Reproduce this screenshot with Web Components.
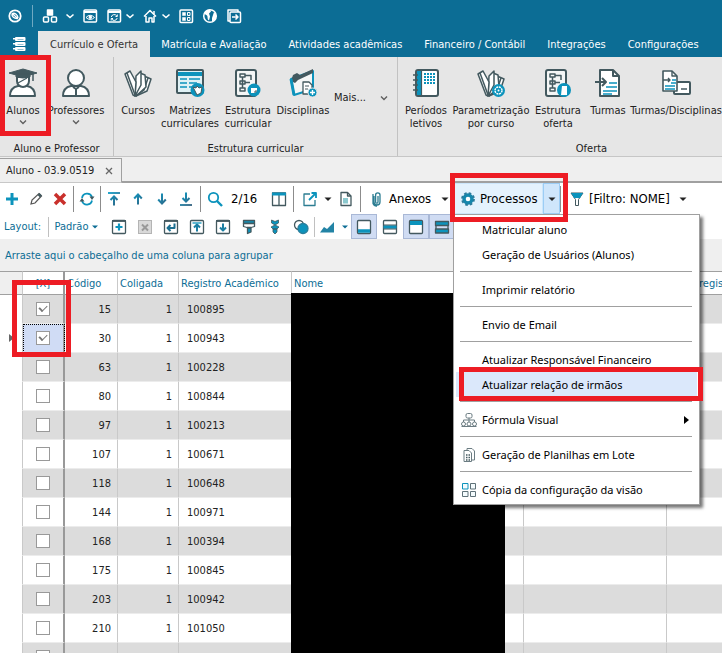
<!DOCTYPE html>
<html lang="pt-BR">
<head>
<meta charset="utf-8">
<title>Aluno - 03.9.0519</title>
<style>
  :root {
    --ui: "DejaVu Sans Condensed", "DejaVu Sans", sans-serif;
    --menu: "Noto Sans", "Open Sans", sans-serif;
    --blue: #0c6d95;
    --teal: #0c93bc;
    --slate: #43595f;
    --line: #a0a0a0;
    --panel: #efefef;
    --red: #ed1c24;
  }
  html, body { height: 100%; }
  body { margin: 0; overflow: hidden; font: 11px/13px var(--ui); color: #222; background: #fff; }
</style>
</head>
<body>
<app-shell></app-shell>

<script>
const T = '#0c93bc', S = '#43595f';
const book = '<g stroke-width="1.500" fill="#fff"><path d="M21 8l7 3-4 12-11 5z"/><path d="M25 10l-4 12-8 6"/><path d="M17 5l5 2 1 12-10 9z"/><path d="M13 8l5-5v14l-6 11z"/><path d="M2 6l5-3 6 11-1 14-2-1z"/><path d="M4 5l8 22"/></g>';
const flow = '<rect x="3" y="2" width="20" height="26" rx="2" fill="#f4f6f6"/><path d="M7 6h5v3H7zM7 13h5v3H7zM7 20h5v3H7zM9.500 9v11M12 7.500h6V12M12 14.500h5" stroke-width="1.500" fill="none"/>';
const sheet = (x, y, w, h) => `<path fill="#fff" d="M${x} ${y}h${w - 6}l6 6v${h - 6}h-${w}z"/><path d="M${x + w - 6} ${y}v6h6" fill="none"/>`;
const R = body => [30, `<g stroke="${S}" stroke-width="2" stroke-linejoin="round">${body}</g>`];
const W = body => [16, `<g stroke="#fff" stroke-width="1.500" fill="none" stroke-linejoin="round">${body}</g>`];
const K = body => [16, `<g stroke="${S}" stroke-width="1.300" fill="none" stroke-linejoin="round">${body}</g>`];
const frame = '<rect x="1.500" y="1.500" width="13" height="13" rx="1" fill="#fff"/>';
const arrow = (d, bar) => [16, `<g fill="none" stroke="url(#ab)" stroke-width="2"><path d="${d}"/><path d="${bar || ''}" stroke-width="1.800"/></g><defs><linearGradient id="ab" gradientUnits="userSpaceOnUse" x1="2" y1="2" x2="14" y2="14"><stop stop-color="#0c9dc8"/><stop offset="1" stop-color="#34607e"/></linearGradient></defs>`];

const ICONS = {
  logo: W('<circle cx="8" cy="8" r="5.700" stroke-width="1.800"/><path d="M5 5.500c3-1 6 1.500 6 4.500M5 5.500c-.5 3 2 5.500 6 5M5 5.500l6 5" stroke-width="1.300"/>'),
  cubes: W('<path fill="#fff" d="M5.500 2h5v5h-5z"/><rect x="1.500" y="9" width="5" height="5" rx="1"/><rect x="9.500" y="9" width="5" height="5" rx="1"/>'),
  eye: W('<rect x="2" y="2" width="12.500" height="12" rx="1"/><path d="M2 4h12" stroke-width="2"/><path d="M4 9.500q4-4.500 8.500 0q-4.500 4-8.500 0z" stroke-width="1"/><circle cx="8.300" cy="9.300" r="1" fill="#fff"/>'),
  cycle: W('<rect x="2" y="2" width="12.500" height="12" rx="1"/><path d="M2 4h12" stroke-width="2"/><path d="M5.300 9a3 3 0 0 1 5.500-1M11.200 10a3 3 0 0 1-5.500 1M11.300 6.500v2H9.500M5.200 12.500v-2H7" stroke-width="1"/>'),
  home: W('<path d="M2 8.500L8 2.500l6 6M4 8v6h3v-4h3v4h2V8" /><path d="M12 3v3"/>'),
  tiles: W('<rect x="2" y="2" width="12.500" height="12.500" rx="1"/><path d="M4.500 4.500h3v3h-3zM4.500 9.500h3v3h-3z" fill="#fff" stroke-width=".5"/><path d="M9.500 4.500h2.500v3h-2.500zM9.500 9.500h2.500v3h-2.500z" stroke-width="1"/>'),
  globe: W('<circle cx="8" cy="8" r="6.300"/><path d="M2 6c1-3 4-4.500 6-4.500l1 2-2 2 1 3-1 4c-2-1-1-4-2-5s-2-1-3-1.500zM12 4l2 2v5l-4 3 0-4z" fill="#fff" stroke="none"/>'),
  leave: W('<path d="M2 3V2h10v2M2 3v10h2"/><rect x="4" y="4" width="10.500" height="10.500" rx="1"/><path d="M6 9h6M9.500 6.500L12 9l-2.500 2.500"/>'),
  menu: [16, '<g fill="#fff"><rect x="4" y="1" width="10.500" height="4" rx="1"/><rect x="4" y="6" width="10.500" height="4" rx="1"/><rect x="4" y="11" width="10.500" height="4" rx="1"/><path d="M2 2h3v1.500H2zM2 7h3v1.500H2zM2 12h3v1.500H2z"/></g><path d="M6.500 3.500h6M6.500 8.500h6M6.500 13.500h6" stroke="#7fb3c9" stroke-width=".8"/>'],
  chevW: [10, '<path d="M1.500 3.500L5 6.500l3.500-3" stroke="#fff" stroke-width="1.600" fill="none"/>'],
  chev: [10, '<path d="M2 3.500l3 3 3-3" stroke="#606060" stroke-width="1.400" fill="none"/>'],
  caret: [10, '<path d="M1.500 3.500h7L5 7z" fill="#222"/>'],
  caretB: [10, '<path d="M2 3.500h6L5 6.500z" fill="#0c6d95"/>'],
  close: [10, '<path d="M2 2l6 6M8 2L2 8" stroke="#666" stroke-width="1.300"/>'],

  student: R(`<path fill="#fff" d="M2 28c0-6 3-9 8-10h9c5 1 8 4 8 10z"/><path fill="#fff" d="M9 9h12v4a6 6 0 0 1-12 0z"/><path d="M10 15l9-5" stroke-width="1.200"/><path fill="${S}" d="M1 5l14-4 14 4-14 4zM8 6h14v3l-7 1-7-1z" stroke-width="1"/><path d="M25 6v7" stroke-width="1.500"/>`),
  teacher: R('<path fill="#fff" d="M2 28c0-6 3-9 8-10h10c5 1 8 4 8 10z"/><circle cx="15" cy="10" r="8" fill="#fff"/><path d="M12 19l3 2 3-2M15 21v7" fill="none"/>'),
  books: R(book),
  matrix: R(`<rect x="2" y="2" width="26" height="23" rx="1" fill="#dff1f5"/><path d="M3 6h24" stroke="${T}" stroke-width="4"/><path d="M5 11h7M5 15h7M5 19h7M14 11h11M14 15h8M14 19h5" stroke="${T}" stroke-width="1.300"/><circle cx="22.500" cy="22" r="7" fill="${T}" stroke="none"/><path d="M18 19l3 1 1-2 2 2 3-1-1 6-4 2z" fill="#fff" stroke-width="1"/>`),
  flowA: R(flow + `<circle cx="21" cy="22" r="6.500" fill="${T}" stroke="none"/><path d="M18 20h6v3l-2 2h-4z" fill="#fff" stroke="none"/><path d="M22 25v-2h2" stroke-width="1" fill="none"/>`),
  flowB: R(flow + `<circle cx="21" cy="22" r="7" fill="${T}" stroke="none"/><path d="M19 18h5v9h-6z" fill="#fff" stroke="none"/>`),
  folder: R(`<path fill="#f4f6f6" stroke="${T}" d="M3 11L25 3v18L6 27z"/><path fill="${S}" stroke="none" d="M3 13l2-6 4-2 3 2 13-6v4L10 12l-3 3z"/><path d="M3 11l3 16" stroke="${T}" stroke-width="3"/><path fill="#fff" d="M15 14h6l3 3v9h-9z" stroke-width="1.300"/><path d="M17 18h4M17 21h3" stroke-width="1"/><circle cx="24.500" cy="24.500" r="4.500" fill="${T}" stroke="#e6e6e6" stroke-width="1"/><path d="M22 24.500h5M24.500 22v5" stroke="#fff" stroke-width="1.400"/>`),
  notebook: R(`<rect x="5" y="2" width="22" height="26" rx="2" fill="#fff"/><path d="M8 3v24" stroke="${T}" stroke-width="4"/><path d="M10.500 2v26" stroke-width="1.200"/><path d="M2 7h5M2 12h5M2 17h5M2 22h5" stroke-width="1.500"/><path d="M13 6h12M13 9h12M13 12h12M13 15h12" stroke="${T}" stroke-width="2" stroke-dasharray="2 1"/>`),
  booksGear: R(book + `<circle cx="22.500" cy="22.500" r="6.500" fill="${T}" stroke="none"/><circle cx="22.500" cy="22.500" r="3.500" fill="none" stroke="#fff" stroke-width="1.400" stroke-dasharray="2 .75"/><circle cx="22.500" cy="22.500" r="1" fill="#fff" stroke="none"/>`),
  pageIn: R(sheet(7, 2, 19, 26) + `<path d="M2 14h11M9 10l4 4-4 4" fill="none"/><path d="M16 15h8M13 19h11M10 23h14M10 26h9" stroke="${T}" stroke-width="1.600"/>`),
  pageCard: R(`<rect x="13" y="14" width="16" height="12" rx="1" fill="#fff"/><path d="M20 21h6" stroke-width="1.500"/><path fill="#fff" d="M2 3h9l5 5v15H2z" stroke-width="1.600"/><path d="M11 3v5h5M2 12h7M7 10l2 2-2 2" fill="none" stroke-width="1.400"/><path d="M11 12h4M10 15h5M4 18h10M4 21h10" stroke="${T}" stroke-width="1.500"/>`),

  plus: [16, `<path d="M8 2v12M2 8h12" stroke="${T}" stroke-width="3"/>`],
  pencil: [16, '<path d="M3 13l1-4 7-6.500 2.500 2.500L7 12z" fill="#fff" stroke="#555" stroke-width="1.200"/><path d="M9.500 4l2-2 2.500 2.500-2 2z" fill="#43595f"/>'],
  cross: [16, '<path d="M3 3l10 10M13 3L3 13" stroke="#c9302c" stroke-width="3.500"/>'],
  refresh: [16, `<path d="M3 7a5.200 5.200 0 0 1 10-1M13 9.500a5.200 5.200 0 0 1-10 .5" fill="none" stroke="${T}" stroke-width="1.800"/><path d="M10.500 5.500h5L13 9zM.5 10.500h5L3 7z" fill="${S}"/>`],
  top: arrow('M8 14.500V5.500M4.500 9L8 5.500 11.500 9', 'M2 2h12'),
  up: arrow('M8 13.500V3.500M4.200 7.500L8 3.500l3.800 4'),
  down: arrow('M8 2.500v10M4.200 8.500l3.800 4 3.800-4'),
  bottom: arrow('M8 1.500v9M4.500 7L8 10.500 11.500 7', 'M2 14h12'),
  search: [16, `<circle cx="6.500" cy="6.500" r="4.700" fill="none" stroke="${T}" stroke-width="1.800"/><path d="M10 10l5 5" stroke="${T}" stroke-width="2.400"/>`],
  columns: K(`<path d="M1.500 2h13v12.500h-13zM8 2v12.500"/><path d="M1 3h14" stroke="${T}" stroke-width="3"/>`),
  share: K(`<path d="M8 3H2v11.500h11V9" stroke="#2c7d92"/><path d="M7 9l6-6M9.500 2H14v5" stroke="${T}" stroke-width="1.800"/>`),
  page: K('<path fill="#fff" d="M3 1.500h6.500L13 5v9.500H3z"/><path d="M9.500 1.500V5H13" /><path d="M5 7h5v5.500H5z" fill="#8cc9cf" stroke="none"/>'),
  clip: [16, `<path d="M5 5v6a3 3 0 0 0 6 0V4a2.200 2.200 0 0 0-4.400 0v7a1 1 0 0 0 2.400 0V5M4 3v9.500a4 4 0 0 0 4 2.500" fill="none" stroke="#2c7d92" stroke-width="1.300"/>`],
  gear: [16, `<circle cx="8" cy="8" r="4" fill="#fff" stroke="#1587ad" stroke-width="3.400"/><circle cx="8" cy="8" r="6" fill="none" stroke="#2b7a9a" stroke-width="1.800" stroke-dasharray="2.600 2.110"/>`],
  funnel: [16, `<path d="M2 2h12L9.500 8.500v6h-3v-6z" fill="#fff" stroke="#43595f" stroke-width="1"/><path d="M2 2h12l-3 5H5z" fill="${T}"/>`],

  addBox: K(frame + `<path d="M8 4.500v7M4.500 8h7" stroke="${T}" stroke-width="2.200"/><path d="M1 2h14" stroke-width="1.800"/>`),
  delBox: [16, '<rect x="1.500" y="1.500" width="13" height="13" fill="#d9d9d9" stroke="#b4b4b4"/><path d="M5 5.500l6 6M11 5.500l-6 6" stroke="#999" stroke-width="2"/>'],
  backBox: K(frame + `<path d="M11.500 4.500V9H5M7.500 6L4.500 9l3 3" stroke="#1b6f91" stroke-width="2"/><path d="M1 2h14" stroke-width="1.800"/>`),
  upBox: K(frame + `<path d="M8 12.500V6M5 8.500l3-3 3 3" stroke="#1b7fa3" stroke-width="2"/><path d="M3.500 4h9" stroke="${T}"/>`),
  downBox: K(frame + `<path d="M8 4.500V11M5 8.500l3 3 3-3" stroke="#1b7fa3" stroke-width="2"/><path d="M1 2h14" stroke-width="1.800"/>`),
  brush: K(`<path fill="${T}" d="M2.500 1.500h11v3h-11z"/><path fill="#fff" d="M2.500 4.500h11v3l-3.500 1H6l-3.500-1z"/><path fill="${T}" d="M6.500 9h3.500v4l-3.500 1.500z"/>`),
  pin: [16, `<path d="M4.500 1L8 2.500 11.500 1v3L8 6 4.500 4zM8 6l4 2-2 2H6L4 8zM6 10h4v3l-2 2-2-2z" fill="${T}" stroke="${S}" stroke-width=".8"/>`],
  circles: K(`<circle cx="6" cy="6" r="4.500" fill="#fff"/><circle cx="10" cy="9.500" r="5" fill="${T}" stroke="#2a7f9c"/>`),
  chart: [16, `<path d="M1 13.500l4-5.500 3 2 7-7v10.500z" fill="#2283a5"/>`],
  paneB: K(frame + `<path d="M2 12h12" stroke="${T}" stroke-width="3.500"/>`),
  paneM: K(frame + `<path d="M1.500 8h13" stroke="${T}" stroke-width="3.500"/><path d="M1 6h14M1 10h14" stroke-width="1"/>`),
  paneT: K(frame + `<path d="M2 4h12" stroke="${T}" stroke-width="4"/>`),
  rows: K(`<path fill="${T}" d="M1.500 2.500h13v4h-13zM1.500 10h13v4h-13z"/><path d="M2 6.500v3.500M14 6.500v3.500"/>`),

  tree: [16, '<g fill="#fff" stroke="#6b7c82"><rect x="5" y="1.500" width="6" height="4.500" rx="1.500"/><circle cx="2.500" cy="12" r="2"/><circle cx="8" cy="12" r="2"/><circle cx="13.500" cy="12" r="2"/><path d="M8 6v4M2.500 10V8h11v2" fill="none"/><path d="M.5 14.500h15"/></g>'],
  sheets: [16, `<g fill="#fff" stroke="#6b7c82"><path d="M6 1.500h5l2.500 2.500v9H6z"/><path d="M3 3.500h5l2.500 2.500v8.500H3z"/></g><path d="M5 8h4M5 10.500h4M5 13h4" stroke="${S}" stroke-width="1.400" stroke-dasharray="1.500 1"/>`],
  grid4: [16, `<g fill="#f4fbfd" stroke="#5f7178"><path stroke="${T}" d="M1.500 1.500h5.500v5.500H1.500z"/><path d="M9.500 1.500h5v5.500h-5zM1.500 9.500h5.500v5H1.500zM9.500 9.500h5v5h-5z"/></g>`],
};

function define(name, html, setup) {
  const tpl = document.createElement('template');
  tpl.innerHTML = html;
  customElements.define(name, class extends HTMLElement {
    connectedCallback() {
      if (this.shadowRoot) return;
      const root = this.attachShadow({ mode: 'open' });
      root.append(tpl.content.cloneNode(true));
      if (setup) setup(this, root);
    }
  });
}
const buttonReset = 'button{font:inherit;color:inherit;background:none;border:0;margin:0;padding:0;}';

define('ui-icon', `<style>:host{display:block;flex:none;width:var(--size,16px);height:var(--size,16px)}svg{display:block;width:100%;height:100%}</style>`,
  (el, root) => {
    const [box, body] = ICONS[el.getAttribute('name')];
    root.innerHTML += `<svg viewBox="0 0 ${box} ${box}" aria-hidden="true">${body}</svg>`;
  });

define('call-out', `<style>:host{display:block;position:absolute;box-sizing:border-box;border:5px solid var(--red);pointer-events:none;z-index:5}</style>`);

/* title bar */
define('quick-button', `<style>:host{display:block}${buttonReset}button{display:flex;align-items:center}
  ui-icon.i{margin:0 2px}ui-icon.c{--size:10px;margin:0 1px}</style><button></button>`,
  (el, root) => {
    const b = root.querySelector('button');
    b.setAttribute('aria-label', el.getAttribute('label'));
    b.innerHTML = (el.hasAttribute('icon') ? `<ui-icon class="i" name="${el.getAttribute('icon')}"></ui-icon>` : '')
      + (el.hasAttribute('drop') ? '<ui-icon class="c" name="chevW"></ui-icon>' : '');
  });

define('ribbon-tab', `<style>:host{display:flex}${buttonReset}button{padding:0 11px;color:#fff;white-space:nowrap}
  :host([active]) button{padding:0 12px;background:#e6e6e6;color:#333}</style><button role="tab"><slot></slot></button>`);

define('title-bar', `<style>
  :host{display:block;background:var(--blue)}
  ${buttonReset}
  .quick{display:flex;align-items:center;gap:4px;height:31px;padding-left:5px}
  .sep{width:7px;height:22px;background:linear-gradient(#6fa9c2,#6fa9c2) center/1px 100% no-repeat}
  .tabs{display:flex;height:26px}
  button.app{width:38px;display:flex;justify-content:center;align-items:center}
  </style>
  <div class="quick">
    <quick-button icon="logo" label="Início"></quick-button><span class="sep"></span>
    <quick-button icon="cubes" label="Módulos"></quick-button><quick-button drop label="Mais módulos"></quick-button>
    <quick-button icon="eye" label="Visões"></quick-button><quick-button icon="cycle" drop label="Atualizar"></quick-button>
    <quick-button icon="home" drop label="Página inicial"></quick-button><quick-button icon="tiles" label="Painel"></quick-button>
    <quick-button icon="globe" label="Portal"></quick-button><quick-button icon="leave" label="Sair"></quick-button>
  </div>
  <div class="tabs" role="tablist">
    <button class="app" aria-label="Menu"><ui-icon name="menu"></ui-icon></button>
    <slot></slot>
  </div>`);

/* ribbon */
define('ribbon-item', `<style>
  :host{display:block;flex:none;position:relative}
  ${buttonReset}
  button{width:100%;display:flex;flex-direction:column;align-items:center;padding-top:11px;text-align:center;white-space:nowrap}
  ui-icon{--size:30px}.text{margin-top:6px}
  .chev{--size:10px}
  :host([inline]) button{flex-direction:row;justify-content:space-between;padding:34px 8px 0 6px}
  :host([inline]) .text{margin:0}
  </style><button><span class="text"><slot></slot></span></button><slot name="mark"></slot>`,
  (el, root) => {
    const b = root.querySelector('button');
    if (el.hasAttribute('icon')) b.insertAdjacentHTML('afterbegin', `<ui-icon name="${el.getAttribute('icon')}"></ui-icon>`);
    if (el.hasAttribute('drop')) b.insertAdjacentHTML('beforeend', '<ui-icon class="chev" name="chev"></ui-icon>');
  });

define('ribbon-group', `<style>
  :host{display:flex;flex-direction:column;flex:none;box-sizing:border-box;border-right:1px solid #c2c2c2}
  .items{display:flex;flex:1}
  .caption{text-align:center;height:14px}
  </style><div class="items"><slot></slot></div><div class="caption"></div>`,
  (el, root) => { root.querySelector('.caption').textContent = el.getAttribute('caption'); });

define('app-ribbon', `<style>:host{display:flex;height:99px;background:#e6e6e6;border-bottom:1px solid #c6c6c6}</style><slot></slot>`);

define('document-tabs', `<style>
  :host{display:flex;height:26px;background:var(--panel);box-sizing:border-box;padding-top:1px}
  ${buttonReset}
  .tab{display:flex;align-items:center;gap:10px;padding:0 7px 0 6px;border:1px solid var(--line);border-left:0;border-bottom-color:#c8c8c8;white-space:nowrap}
  .rest{flex:1;border-bottom:2px solid var(--line)}
  ui-icon{--size:10px}
  </style><div class="tab"><slot></slot><button aria-label="Fechar"><ui-icon name="close"></ui-icon></button></div><div class="rest"></div>`);

/* tool bars */
define('tool-button', `<style>
  :host{display:flex;flex:none;width:var(--w,24px);align-self:stretch}
  ${buttonReset}
  button{flex:1;display:flex;align-items:center;justify-content:center;white-space:nowrap}
  :host([pressed]) button{background:#d0dcf3;box-shadow:inset 0 0 0 1px #a9b8d6}
  .c{--size:10px;margin:0 1px}
  .i{margin:0 4px}
  :host([pack]) button{justify-content:flex-start}
  </style><button><slot></slot></button>`,
  (el, root) => {
    const b = root.querySelector('button');
    if (el.hasAttribute('label')) b.setAttribute('aria-label', el.getAttribute('label'));
    if (el.hasAttribute('pressed')) b.setAttribute('aria-pressed', 'true');
    if (el.hasAttribute('icon')) b.insertAdjacentHTML('afterbegin', `<ui-icon class="i" name="${el.getAttribute('icon')}"></ui-icon>`);
    if (el.hasAttribute('caret')) b.insertAdjacentHTML('beforeend', `<ui-icon class="c" name="${el.getAttribute('caret')}"></ui-icon>`);
  });

define('menu-item', `<style>
  :host{display:block;position:relative}
  ${buttonReset}
  button{display:flex;align-items:center;width:100%;height:25px;padding:0 8px 0 5px;text-align:left;white-space:nowrap}
  .slot{width:18px;margin-right:3px;flex:none}
  .text{flex:1}
  .arrow{border:4px solid transparent;border-left:5px solid #000;border-right:0}
  :host([current]) button{background:#dbe8fb}
  </style><button role="menuitem"><span class="slot"></span><span class="text"><slot></slot></span></button><slot name="mark"></slot>`,
  (el, root) => {
    if (el.hasAttribute('icon')) root.querySelector('.slot').innerHTML = `<ui-icon name="${el.getAttribute('icon')}"></ui-icon>`;
    if (el.hasAttribute('sub')) root.querySelector('button').insertAdjacentHTML('beforeend', '<span class="arrow"></span>');
  });

define('menu-line', `<style>:host{display:block;margin:4px 5px 5px 4px;height:1px;background:var(--line)}</style>`);

define('popup-menu', `<style>
  :host{display:block;position:absolute;top:100%;left:-1px;z-index:4;box-sizing:border-box;width:247px;padding:2px;
    border:1px solid var(--line);background:#fff;color:#000;font:11px/15px var(--menu);box-shadow:3px 3px 3px #0008}
  </style><div role="menu"><slot></slot></div>`);

define('process-button', `<style>
  :host{display:flex;flex:none;position:relative;align-self:stretch}
  ${buttonReset}
  button.main{display:flex;align-items:center;gap:4px;width:89px;padding-left:6px;background:#e4f2fd;box-shadow:inset 0 0 0 1px #cce6fb}
  button.drop{width:17px;background:#cfe6fb;box-shadow:inset 0 0 0 1px #9ccdf5;display:flex;align-items:center;justify-content:center}
  ui-icon.c{--size:10px}
  call-out{inset:-10px -8px -8px -4px}
  </style>
  <button class="main"><ui-icon name="gear"></ui-icon>Processos</button>
  <button class="drop" aria-label="Abrir processos" aria-expanded="true"><ui-icon class="c" name="caret"></ui-icon></button>
  <slot></slot><call-out></call-out>`);

define('view-toolbar', `<style>
  :host{display:block;background:#fff;white-space:nowrap}
  .row{display:flex;align-items:center}
  .main{height:31px;font-size:13px;line-height:16px;color:#000}
  .layout{height:25px;color:#0c6d95}
  .sep{flex:none;width:1px;height:26px;background:#8c8c8c;margin:0 4px 0 2px}
  .sep.even{margin:0 2px}
  .sep.tight{margin:0 1px}
  .sep.flush{margin:0 4px 0 0}
  .layout .sep{height:20px;background:#c0c0c0;margin:0}
  .count{box-sizing:border-box;width:40px;padding-left:4px}
  .label{box-sizing:border-box;width:48px;padding-left:4px}
  .layout tool-button{--w:26px}
  .layout .mode{--w:57px}.layout .graph{--w:36px}
  .export{--w:36px}.attach{--w:89px}.filter{--w:128px}
  </style>
  <div class="row main">
    <tool-button icon="plus" label="Incluir"></tool-button><tool-button icon="pencil" label="Editar"></tool-button>
    <tool-button icon="cross" label="Excluir"></tool-button><span class="sep tight"></span>
    <tool-button icon="refresh" label="Atualizar"></tool-button><span class="sep tight"></span>
    <tool-button icon="top" label="Primeiro"></tool-button><tool-button icon="up" label="Anterior"></tool-button>
    <tool-button icon="down" label="Próximo"></tool-button><tool-button icon="bottom" label="Último"></tool-button><span class="sep even"></span>
    <tool-button icon="search" label="Procurar"></tool-button><span class="count">2/16</span>
    <tool-button icon="columns" label="Colunas"></tool-button><span class="sep"></span>
    <tool-button class="export" icon="share" caret="caret" label="Exportar"></tool-button>
    <tool-button icon="page" label="Relatório"></tool-button><span class="sep"></span>
    <tool-button class="attach" pack icon="clip" caret="caret">Anexos&nbsp;&nbsp;</tool-button>
    <slot></slot><span class="sep flush"></span>
    <tool-button class="filter" pack icon="funnel" caret="caret">[Filtro: NOME]&nbsp;&nbsp;</tool-button>
  </div>
  <div class="row layout">
    <span class="label">Layout:</span><span class="sep"></span>
    <tool-button class="mode" caret="caretB">Padrão</tool-button>
    <tool-button icon="addBox" label="Novo layout"></tool-button><tool-button icon="delBox" label="Excluir layout"></tool-button>
    <tool-button icon="backBox" label="Restaurar"></tool-button><tool-button icon="upBox" label="Exportar layout"></tool-button>
    <tool-button icon="downBox" label="Importar layout"></tool-button><tool-button icon="brush" label="Formatar"></tool-button>
    <tool-button icon="pin" label="Fixar"></tool-button><tool-button icon="circles" label="Condições"></tool-button><span class="sep"></span>
    <tool-button class="graph" icon="chart" caret="caretB" label="Gráfico"></tool-button>
    <tool-button pressed icon="paneB" label="Rodapé"></tool-button><tool-button icon="paneM" label="Detalhe"></tool-button>
    <tool-button pressed icon="paneT" label="Cabeçalho"></tool-button><tool-button pressed icon="rows" label="Agrupamento"></tool-button>
  </div>`);

/* record grid */
define('record-grid', `<style>
  :host{display:block;position:relative;background:#fff}
  .group{height:32px;line-height:34px;padding-left:5px;background:var(--panel);color:#0c6d95;font-size:11px}
  .body{position:relative}
  table{width:100%;min-width:722px;table-layout:fixed;border-collapse:separate;border-spacing:0}
  th,td{box-sizing:border-box;padding:0 8px;border-right:1px solid #c9c9c9;text-align:left;font-weight:normal;white-space:nowrap;overflow:hidden}
  th{height:24px;border-top:1px solid var(--line);border-bottom:1px solid var(--line);color:#0c6d95;padding:0 2px}
  td{height:29px;border-bottom:1px solid #ececec}
  tr:nth-child(odd) td{background:#dcdcdc}
  tbody tr td:first-child{background:#fff;border-bottom-color:#fff;padding:0}
  th:first-child{background:var(--panel)}
  th.pick,td.pick{border-right:2px solid #999;padding:0;text-align:center}
  td.num{text-align:right;padding:0 6px}
  th:last-child{padding:0 0 0 32px;border-right:0}td:last-child{border-right:0}
  input{appearance:none;display:block;box-sizing:border-box;width:14px;height:14px;margin:0 auto;border:1px solid #999;background:#fff}
  input:checked::before{content:"";display:block;width:8px;height:5px;box-sizing:border-box;margin:2px auto;border:solid #777;border-width:0 0 1px 2px;transform:rotate(-45deg)}
  tbody tr.active td.pick{background:#d0dcf5;outline:1px dotted #000;outline-offset:-1px}
  .ptr{display:block;margin-left:9px;width:0;border:4px solid transparent;border-left:5px solid #666;border-right:0}
  .mask{position:absolute;left:291px;top:22px;bottom:0;width:214px;background:#000}
  call-out{left:12px;top:9px;width:59px;height:77px}
  </style>
  <div class="group">Arraste aqui o cabeçalho de uma coluna para agrupar</div>
  <div class="body"><table>
    <colgroup><col style="width:23px"><col style="width:42px"><col style="width:53px"><col style="width:61px"><col style="width:113px"><col style="width:232px"><col style="width:143px"><col></colgroup>
    <thead><tr><th></th><th class="pick">[X]</th><th>Código</th><th>Coligada</th><th>Registro Acadêmico</th><th>Nome</th><th></th><th>regis</th></tr></thead>
    <tbody></tbody></table><div class="mask"></div><call-out></call-out></div>`,
  (el, root) => {
    const rows = [[15, 100895], [30, 100943], [63, 100228], [80, 100844], [97, 100213], [107, 100671], [118, 100648],
      [144, 100971], [168, 100394], [175, 100845], [203, 100942], [210, 101050], ['', '']];
    root.querySelector('tbody').innerHTML = rows.map(([id, reg], i) => `<tr${i === 1 ? ' class="active"' : ''}>
      <td>${i === 1 ? '<span class="ptr"></span>' : ''}</td>
      <td class="pick"><input type="checkbox" aria-label="Selecionar ${id}"${i < 2 ? ' checked' : ''}></td>
      <td class="num">${id}</td><td class="num">${id ? 1 : ''}</td><td>${reg}</td><td></td><td></td><td></td></tr>`).join('');
  });

/* page */
define('app-shell', `<style>
  :host{display:block;height:100vh;overflow:hidden}
  .w40{width:40px}.w46{width:46px;z-index:1}.w48{width:48px}.w50{width:50px}.w56{width:56px}.w60{width:60px}.w70{width:69px}.w74{width:74px}.w96{width:96px}
  .first{width:114px}.last{width:388px}
  .student-mark{left:0;top:-2px;width:51px;height:81px}
  .sibling-mark{left:3px;right:-6px;top:-5px;height:34px}
  </style>
  <title-bar>
    <ribbon-tab active>Currículo e Oferta</ribbon-tab><ribbon-tab>Matrícula e Avaliação</ribbon-tab>
    <ribbon-tab>Atividades acadêmicas</ribbon-tab><ribbon-tab>Financeiro / Contábil</ribbon-tab>
    <ribbon-tab>Integrações</ribbon-tab><ribbon-tab>Configurações</ribbon-tab>
  </title-bar>
  <app-ribbon>
    <ribbon-group class="first" caption="Aluno e Professor">
      <ribbon-item class="w46" icon="student" drop>Alunos<call-out slot="mark" class="student-mark"></call-out></ribbon-item>
      <ribbon-item class="w60" icon="teacher" drop>Professores</ribbon-item>
    </ribbon-group>
    <ribbon-group caption="Estrutura curricular">
      <ribbon-item class="w48" icon="books">Cursos</ribbon-item>
      <ribbon-item class="w56" icon="matrix">Matrizes<br>curriculares</ribbon-item>
      <ribbon-item class="w60" icon="flowA">Estrutura<br>curricular</ribbon-item>
      <ribbon-item class="w50" icon="folder">Disciplinas</ribbon-item>
      <ribbon-item class="w70" inline drop>Mais...</ribbon-item>
    </ribbon-group>
    <ribbon-group class="last" caption="Oferta">
      <ribbon-item class="w56" icon="notebook">Períodos<br>letivos</ribbon-item>
      <ribbon-item class="w74" icon="booksGear">Parametrização<br>por curso</ribbon-item>
      <ribbon-item class="w60" icon="flowB">Estrutura<br>oferta</ribbon-item>
      <ribbon-item class="w40" icon="pageIn">Turmas</ribbon-item>
      <ribbon-item class="w96" icon="pageCard">Turmas/Disciplinas</ribbon-item>
    </ribbon-group>
  </app-ribbon>
  <document-tabs>Aluno - 03.9.0519</document-tabs>
  <view-toolbar>
    <process-button>
      <popup-menu>
        <menu-item>Matricular aluno</menu-item>
        <menu-item>Geração de Usuários (Alunos)</menu-item>
        <menu-line></menu-line>
        <menu-item>Imprimir relatório</menu-item>
        <menu-line></menu-line>
        <menu-item>Envio de Email</menu-item>
        <menu-line></menu-line>
        <menu-item>Atualizar Responsável Financeiro</menu-item>
        <menu-item current>Atualizar relação de irmãos<call-out slot="mark" class="sibling-mark"></call-out></menu-item>
        <menu-line></menu-line>
        <menu-item icon="tree" sub>Fórmula Visual</menu-item>
        <menu-line></menu-line>
        <menu-item icon="sheets">Geração de Planilhas em Lote</menu-item>
        <menu-line></menu-line>
        <menu-item icon="grid4">Cópia da configuração da visão</menu-item>
      </popup-menu>
    </process-button>
  </view-toolbar>
  <record-grid></record-grid>`);
</script>
</body>
</html>
